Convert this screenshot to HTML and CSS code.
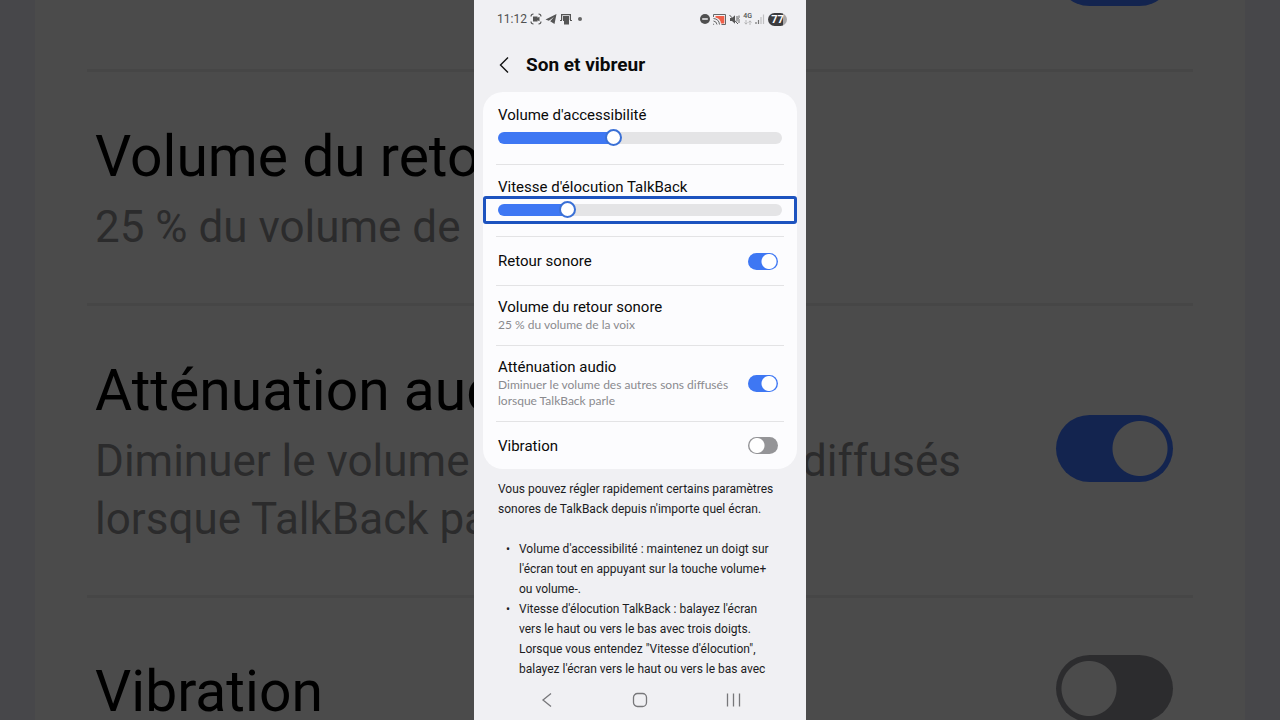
FILE: index.html
```html
<!DOCTYPE html>
<html lang="fr">
<head>
    <meta charset="UTF-8">
    <meta name="viewport" content="width=device-width, initial-scale=1.0">
    <title>Son et vibreur</title>
    <link rel="stylesheet" href="styles.css">
</head>
<body>
    <div class="stage">
        <!-- Enlarged, dimmed copy of the list behind the phone -->
        <div class="backdrop" aria-hidden="true">
            <div class="backdrop-panel">
                <div class="backdrop-row backdrop-single backdrop-end">
                    <input class="backdrop-switch" type="checkbox" aria-label="Retour sonore" tabindex="-1" checked>
                </div>
                <div class="backdrop-row">
                    <div>
                        <div class="backdrop-label">Volume du retour sonore</div>
                        <div class="backdrop-sub">25 % du volume de la voix</div>
                    </div>
                </div>
                <div class="backdrop-row">
                    <div>
                        <label class="backdrop-label" for="bgAttenuation">Atténuation audio</label>
                        <div class="backdrop-sub">Diminuer le volume des autres sons diffusés<br>lorsque TalkBack parle</div>
                    </div>
                    <input class="backdrop-switch" type="checkbox" id="bgAttenuation" tabindex="-1" checked>
                </div>
                <div class="backdrop-row backdrop-single">
                    <label class="backdrop-label" for="bgVibration">Vibration</label>
                    <input class="backdrop-switch" type="checkbox" id="bgVibration" tabindex="-1">
                </div>
            </div>
        </div>

        <div class="phone">
            <div class="status-bar">
                <div class="status-group">
                    <span class="clock">11:12</span>
                    <svg width="12" height="12" viewBox="0 0 12 12" fill="none" stroke="#555" stroke-width="1.1">
                        <path d="M1 3.5Q1 1 3.5 1M8.500 1Q11 1 11 3.500M11 8.500Q11 11 8.500 11M3.500 11Q1 11 1 8.500"/>
                        <path d="M3 3.500h4.500v1.300l2-1v4.400l-2-1v1.300H3z" fill="#555" stroke="none"/>
                    </svg>
                    <svg width="12" height="12" viewBox="0 0 12 12" fill="#555">
                        <path d="M11.500 1 0.500 6.500l3.300 1.200L9 4 5.200 8.300 9.500 11z"/>
                    </svg>
                    <svg width="12" height="12" viewBox="0 0 12 12" fill="#555">
                        <path d="M1 1h10v6H9.800V2.200H2.200V7H1z"/>
                        <path d="M3 3h6v8.500H4V8H3z"/>
                        <path d="M0 7h2v1H0zM10 7h2v1h-2z"/>
                    </svg>
                    <span class="dot"></span>
                </div>
                <div class="status-group">
                    <svg width="10" height="10" viewBox="0 0 10 10">
                        <circle cx="5" cy="5" r="5" fill="#505050"/>
                        <path d="M2.200 5h5.600" stroke="#f0f0f3" stroke-width="1.500"/>
                    </svg>
                    <svg width="13" height="11" viewBox="0 0 13 11" fill="none" stroke="#666">
                        <path d="M2.500 2h8.800v7.500H8Q7.500 4.500 2.500 3.500z" fill="#ef5f48" stroke="none"/>
                        <path d="M0.500 3V0.500h12v10H8.500"/>
                        <path d="M0.500 4.500q5.500.5 6 6M0.500 7q3 .3 3.500 3.500"/>
                        <path d="M0 9.300 1.400 10.800H0z" fill="#666" stroke="none"/>
                    </svg>
                    <svg width="11" height="11" viewBox="0 0 11 11" fill="none" stroke="#555">
                        <path d="M1 4h2l3-2.700v8.400L3 7H1z" fill="#555" stroke="none"/>
                        <path d="M0.500 1 9 10"/>
                        <path d="M8 2v5.500M10 1.500v2l-.7 1 .7 1v3.500" stroke-width=".9"/>
                    </svg>
                    <span class="network">
                        <span>4G</span>
                        <svg width="8" height="5" viewBox="0 0 8 5" fill="none" stroke="#aaa" stroke-width=".8">
                            <path d="M2 0v4M.500 2.500 2 4.200l1.500-1.700M6 5V1M4.500 2.500 6 .800l1.500 1.700"/>
                        </svg>
                    </span>
                    <svg width="10" height="10" viewBox="0 0 10 10">
                        <path d="M1 8v2M3.500 6v4" stroke="#777" stroke-width="1.200"/>
                        <path d="M6 3v7M8.500 0.500v9.500" stroke="#c0c0c2" stroke-width="1.200"/>
                    </svg>
                    <span class="battery">77</span>
                </div>
            </div>

            <header class="title-bar">
                <button class="back-btn" type="button" aria-label="Retour">
                    <svg width="12" height="18" viewBox="0 0 12 18" fill="none" stroke="#111" stroke-width="1.400">
                        <path d="M10 1.500 2.500 9l7.500 7.500"/>
                    </svg>
                </button>
                <h1>Son et vibreur</h1>
            </header>

            <main class="content">
                <section class="panel">
                    <div class="row row-slider">
                        <label class="label" for="volume">Volume d'accessibilité</label>
                        <div class="slider-box">
                            <input class="slider" type="range" id="volume" min="0" max="100" value="40" style="--value: 40%">
                        </div>
                    </div>
                    <div class="row row-slider">
                        <label class="label" for="vitesse">Vitesse d'élocution TalkBack</label>
                        <div class="slider-box slider-focus">
                            <input class="slider" type="range" id="vitesse" min="0" max="100" value="23" style="--value: 23%">
                        </div>
                    </div>
                    <div class="row row-single">
                        <label class="label" for="retour">Retour sonore</label>
                        <input class="switch" type="checkbox" id="retour" checked>
                    </div>
                    <div class="row">
                        <div>
                            <div class="label">Volume du retour sonore</div>
                            <div class="sub">25 % du volume de la voix</div>
                        </div>
                    </div>
                    <div class="row">
                        <div>
                            <label class="label" for="attenuation">Atténuation audio</label>
                            <div class="sub">Diminuer le volume des autres sons diffusés<br>lorsque TalkBack parle</div>
                        </div>
                        <input class="switch" type="checkbox" id="attenuation" checked>
                    </div>
                    <div class="row row-single">
                        <label class="label" for="vibration">Vibration</label>
                        <input class="switch" type="checkbox" id="vibration">
                    </div>
                </section>

                <div class="help">
                    <p>Vous pouvez régler rapidement certains paramètres<br>sonores de TalkBack depuis n'importe quel écran.</p>
                    <ul>
                        <li>Volume d'accessibilité : maintenez un doigt sur<br>l'écran tout en appuyant sur la touche volume+<br>ou volume-.</li>
                        <li>Vitesse d'élocution TalkBack : balayez l'écran<br>vers le haut ou vers le bas avec trois doigts.<br>Lorsque vous entendez "Vitesse d'élocution",<br>balayez l'écran vers le haut ou vers le bas avec</li>
                    </ul>
                </div>
            </main>

            <nav class="nav-bar">
                <button type="button" aria-label="Retour">
                    <svg width="16" height="16" viewBox="0 0 16 16"><path d="M12 1.500 4 8l8 6.500"/></svg>
                </button>
                <button type="button" aria-label="Accueil">
                    <svg width="16" height="16" viewBox="0 0 16 16"><rect x="1.500" y="1.500" width="13" height="13" rx="4"/></svg>
                </button>
                <button type="button" aria-label="Applications récentes">
                    <svg width="16" height="16" viewBox="0 0 16 16"><path d="M2.500 1.500v13M8.500 1.500v13M14.500 1.500v13"/></svg>
                </button>
            </nav>
        </div>
    </div>
</body>
</html>
```
FILE: styles.css
```css
:root {
    --blue: #3E77F3;
    --ring: #1D53BF;
    --page: #F0F0F3;
    --card: #FCFCFE;
    --line: #E3E3E5;
    --grey: #8A8A8E;
}

* {
    margin: 0;
    padding: 0;
    box-sizing: border-box;
}

body {
    font-family: Roboto, "Liberation Sans", sans-serif;
    background: #47474A;
    color: #0A0A0A;
}

button {
    background: none;
    border: none;
    cursor: pointer;
}

svg {
    display: block;
}

/* Phone and backdrop share one grid cell */
.stage {
    display: grid;
    grid-template: 100vh / 100%;
    justify-items: center;
    overflow: hidden;
}

.backdrop,
.phone {
    grid-area: 1 / 1;
}

/* Backdrop */
.backdrop {
    width: 100%;
    padding: 0 35px;
    overflow: hidden;
}

.backdrop-panel {
    margin-top: -116px;
    padding: 0 52px;
    background: #4B4B4B;
}

.backdrop-row {
    display: flex;
    align-items: center;
    justify-content: space-between;
    padding: 51px 20px 47px 8px;
    border-bottom: 3px solid #464646;
    white-space: nowrap;
}

.backdrop-single {
    height: 188px;
    padding-top: 0;
    padding-bottom: 0;
}

.backdrop-end {
    justify-content: flex-end;
}

.backdrop-row:last-child {
    border-bottom: none;
}

.backdrop-label {
    display: block;
    font-size: 57px;
    line-height: 68px;
    color: #000;
}

.backdrop-sub {
    margin-top: 7px;
    font-size: 44px;
    line-height: 58px;
    color: #2B2B2C;
}

.backdrop-switch {
    appearance: none;
    flex: none;
    width: 117px;
    height: 67px;
    margin-bottom: 8px;
    border-radius: 34px;
    background: radial-gradient(circle at 33px 50%, #4B4B4B 27px, #2C2C2E 28px);
}

.backdrop-switch:checked {
    background: radial-gradient(circle at 84px 50%, #4B4B4B 27px, #13244F 28px);
}

/* Phone */
.phone {
    display: flex;
    flex-direction: column;
    width: 100%;
    max-width: 332px;
    min-height: 0;
    background: var(--page);
    z-index: 1;
}

.status-bar {
    display: flex;
    align-items: center;
    justify-content: space-between;
    height: 38px;
    padding: 0 19px 0 23px;
    color: #505050;
}

.status-group {
    display: flex;
    align-items: center;
    gap: 3px;
}

.clock {
    font-size: 12px;
}

.dot {
    width: 4px;
    height: 4px;
    margin-left: 3px;
    border-radius: 50%;
    background: #666;
}

.network {
    display: grid;
    justify-items: center;
    font-size: 7px;
    line-height: 7px;
    font-weight: 500;
}

.battery {
    width: 19px;
    border-radius: 7px;
    background: linear-gradient(90deg, #3C3C3E 77%, #A8A8AA 77%);
    color: #FFF;
    font-size: 11px;
    line-height: 13px;
    font-weight: 700;
    text-align: center;
}

.title-bar {
    display: flex;
    align-items: center;
    gap: 16px;
    height: 54px;
    padding: 0 24px;
}

.title-bar h1 {
    font-size: 19px;
    font-weight: 700;
    line-height: 24px;
}

.content {
    flex: 1;
    min-height: 0;
    overflow: hidden;
}

.panel {
    margin: 0 9px;
    padding: 1px 13px 0;
    border-radius: 20px;
    background: var(--card);
}

.row {
    display: flex;
    align-items: center;
    justify-content: space-between;
    padding: 12px 6px 12px 2px;
    border-bottom: 1px solid var(--line);
    white-space: nowrap;
}

.row:last-child {
    border-bottom: none;
}

.row-single {
    height: 49px;
    padding-top: 0;
    padding-bottom: 0;
}

.row-single:last-child {
    height: 47px;
}

.row-slider {
    display: block;
    padding: 13px 2px 17px;
}

.label {
    display: block;
    font-size: 15px;
    line-height: 18px;
}

.sub {
    margin-top: 1px;
    font-family: Lato, Roboto, sans-serif;
    font-size: 12px;
    line-height: 16px;
    color: var(--grey);
}

.slider-box {
    position: relative;
    margin-top: 5px;
}

/* Accessibility focus frame, drawn over the row */
.slider-focus::after {
    content: "";
    position: absolute;
    inset: -5px -15px;
    border: 3px solid var(--ring);
    border-radius: 3px;
    pointer-events: none;
}

.slider {
    appearance: none;
    display: block;
    width: 100%;
    height: 18px;
    background: none;
}

.slider::-webkit-slider-runnable-track {
    height: 12px;
    border-radius: 6px;
    background: linear-gradient(90deg, var(--blue) var(--value), #E4E4E6 var(--value));
}

.slider::-webkit-slider-thumb {
    appearance: none;
    width: 17px;
    height: 17px;
    margin-top: -3px;
    border: 2px solid #3A70D6;
    border-radius: 50%;
    background: #FFF;
}

.switch {
    appearance: none;
    flex: none;
    width: 30px;
    height: 17px;
    border-radius: 9px;
    background: radial-gradient(circle at 9px 50%, #FFF 7px, #949497 8px);
}

.switch:checked {
    background: radial-gradient(circle at 21px 50%, #FFF 7px, var(--blue) 8px);
}

/* Help text */
.help {
    padding: 10px 24px 0;
    font-size: 12px;
    line-height: 20px;
    color: #1C1C1E;
    white-space: nowrap;
}

.help ul {
    margin-top: 20px;
    list-style: none;
}

.help li {
    position: relative;
    padding-left: 21px;
}

.help li::before {
    content: "•";
    position: absolute;
    left: 8px;
}

.nav-bar {
    display: flex;
    align-items: center;
    justify-content: space-between;
    height: 41px;
    padding: 0 65px;
}

.nav-bar svg {
    fill: none;
    stroke: #77777A;
    stroke-width: 1.3;
}
```
